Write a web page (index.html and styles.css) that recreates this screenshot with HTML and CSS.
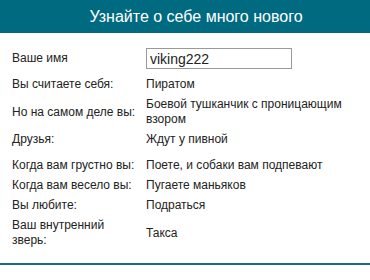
FILE: index.html
```html
<!DOCTYPE html>
<html>
<head>
<meta charset="utf-8">
<link rel="stylesheet" href="styles.css">
</head>
<body>
<div class="panel">
  <div class="header">Узнайте о себе много нового</div>
  <table class="info">
    <tr class="first"><td class="label">Ваше имя</td><td class="value"><input class="name" type="text" value="viking222"></td></tr>
    <tr><td class="label">Вы считаете себя:</td><td class="value">Пиратом</td></tr>
    <tr><td class="label">Но на самом деле вы:</td><td class="value">Боевой тушканчик с проницающим взором</td></tr>
    <tr class="gap"><td class="label">Друзья:</td><td class="value">Ждут у пивной</td></tr>
    <tr><td class="label">Когда вам грустно вы:</td><td class="value">Поете, и собаки вам подпевают</td></tr>
    <tr><td class="label">Когда вам весело вы:</td><td class="value">Пугаете маньяков</td></tr>
    <tr><td class="label">Вы любите:</td><td class="value">Подраться</td></tr>
    <tr><td class="label">Ваш внутренний зверь:</td><td class="value">Такса</td></tr>
  </table>
  <div class="footer-line"></div>
</div>
</body>
</html>
```
FILE: styles.css
```css
html, body {
  margin: 0;
  padding: 0;
  background: #ffffff;
}
.panel {
  width: 370px;
  font-family: "Liberation Sans", Arial, sans-serif;
  font-size: 12px;
  color: #222222;
}
.header {
  height: 33px;
  line-height: 33px;
  background: #006a80;
  color: #ffffff;
  font-size: 16px;
  text-align: center;
  padding-left: 22px;
  box-sizing: border-box;
}
.info {
  border-collapse: collapse;
  table-layout: fixed;
  margin: 13px 0 12px 9px;
  width: 352px;
}
.info td {
  padding: 2px 3px 3px 3px;
  line-height: 15px;
  vertical-align: middle;
}
.info .first td {
  padding-bottom: 6px;
}
.info .gap td {
  padding-bottom: 9px;
}
.label {
  width: 128px;
}
.name {
  display: block;
  box-sizing: border-box;
  width: 146px;
  height: 21px;
  margin: 0;
  padding: 0 3px;
  border: 1px solid #999999;
  font-family: "Liberation Sans", Arial, sans-serif;
  font-size: 14px;
  color: #222222;
}
.footer-line {
  height: 2px;
  background: #1a6e80;
}
```
